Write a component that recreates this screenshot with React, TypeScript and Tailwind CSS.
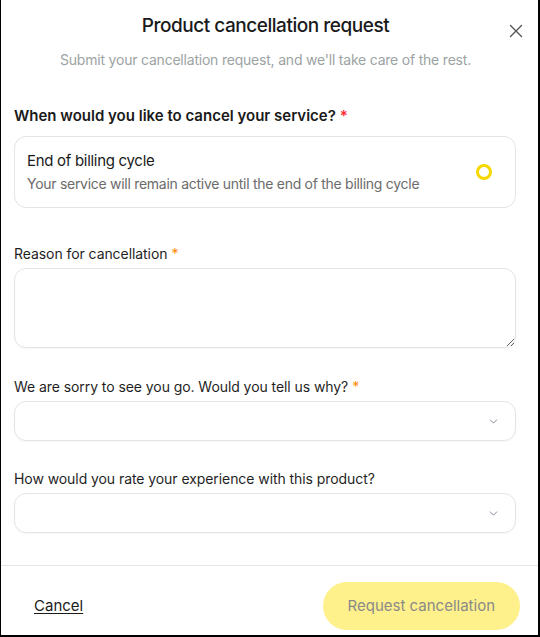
import { ChevronDown, X } from "lucide-react";

function Field({ label, required, children }: { label: string; required?: boolean; children: React.ReactNode }) {
  return (
    <div>
      <label className="block text-[14px] leading-[20px] tracking-[-0.005em] text-[#1f1f1f]">
        {label}
        {required && <span className="ml-1 text-orange-400">*</span>}
      </label>
      <div className="mt-[4px]">{children}</div>
    </div>
  );
}

function Select() {
  return (
    <div className="flex h-[40px] items-center justify-end rounded-[12px] border border-[#e4e4e4] pr-[15px] shadow-[0_1px_2px_rgba(0,0,0,0.04)]">
      <ChevronDown className="h-[13px] w-[13px] text-[#7b8190]" strokeWidth={1.75} />
    </div>
  );
}

export default function App() {
  return (
    <div
      className="flex h-[637px] w-[540px] flex-col border-b-2 border-l border-r-2 border-black bg-white"
      style={{ fontFamily: "Inter, 'Noto Sans', sans-serif" }}
    >
      <header className="relative pr-[8px] pt-[14px] text-center">
        <h2 className="text-[19px] leading-[24px] font-medium tracking-[-0.025em] text-[#1a1a1a]">Product cancellation request</h2>
        <p className="mt-[12px] text-[14px] leading-[20px] tracking-[-0.015em] text-[#9ca3a3]">
          Submit your cancellation request, and we'll take care of the rest.
        </p>
        <button className="absolute right-[11px] top-[20px] text-[#555]">
          <X className="h-[22px] w-[22px]" strokeWidth={1.5} />
        </button>
      </header>

      <div className="pl-[13px] pr-[22px]">
        <p className="mt-[34px] text-[15px] leading-[24px] font-semibold text-[#1a1a1a]">
          When would you like to cancel your service? <span className="text-red-500">*</span>
        </p>
        <div className="mt-[8px] flex items-center justify-between rounded-[12px] border border-[#e4e4e4] px-[12px] py-[12px]">
          <div>
            <p className="text-[15px] leading-[24px] tracking-[-0.02em] text-[#1a1a1a]">End of billing cycle</p>
            <p className="text-[14px] leading-[22px] tracking-[-0.02em] text-[#6b6b6b]">Your service will remain active until the end of the billing cycle</p>
          </div>
          <span className="mr-[11px] h-[16px] w-[16px] rounded-full border-[3px] border-[#f5d800]" />
        </div>

        <div className="mt-[36px]">
          <Field label="Reason for cancellation" required>
            <textarea className="block h-[80px] w-full resize-y rounded-[12px] border border-[#e4e4e4] shadow-[0_1px_2px_rgba(0,0,0,0.04)] outline-none" />
          </Field>
        </div>

        <div className="mt-[29px]">
          <Field label="We are sorry to see you go. Would you tell us why?" required>
            <Select />
          </Field>
        </div>

        <div className="mt-[28px]">
          <Field label="How would you rate your experience with this product?">
            <Select />
          </Field>
        </div>
      </div>

      <footer className="mt-auto flex items-start justify-between border-t border-[#e5e5e5] pb-[5px] pl-[33px] pr-[18px] pt-[16px]">
        <a href="#" className="mt-[12px] text-[15px] leading-[24px] text-[#1a1a1a] underline underline-offset-2">
          Cancel
        </a>
        <button className="h-[48px] rounded-full bg-[#fef08a] px-[25px] text-[15px] text-[#8a8a8a]">Request cancellation</button>
      </footer>
    </div>
  );
}
